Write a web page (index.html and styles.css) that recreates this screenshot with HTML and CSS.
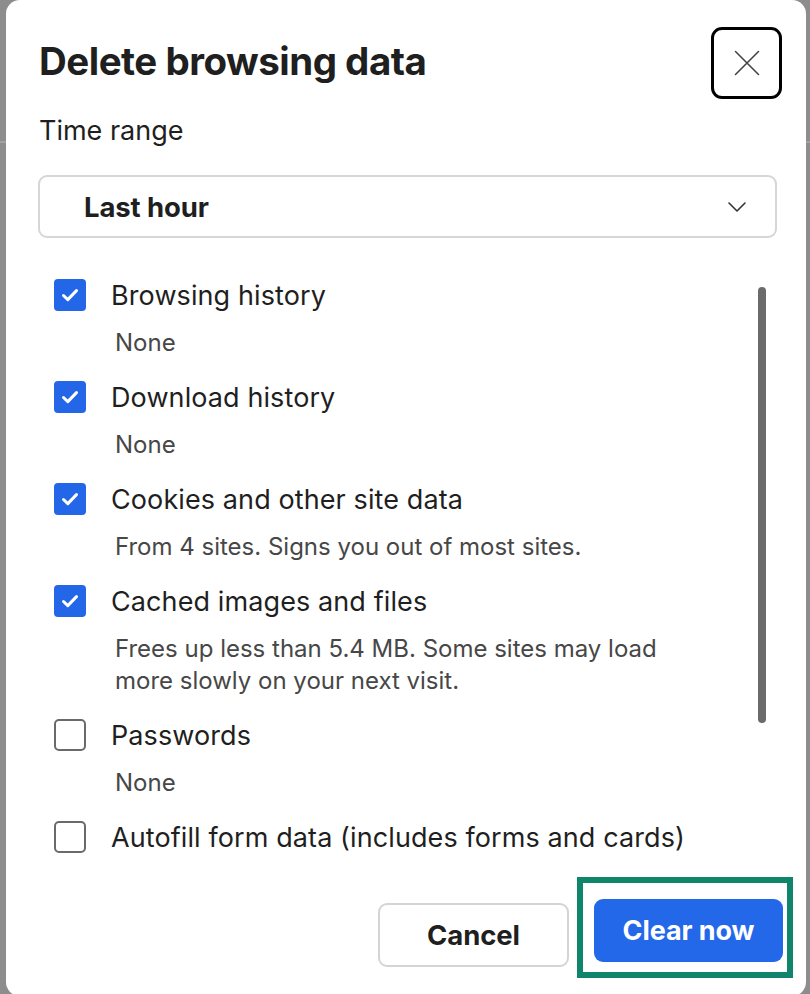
FILE: index.html
```html
<!DOCTYPE html>
<html lang="en">
<head>
<meta charset="utf-8">
<title>Delete browsing data</title>
<link rel="stylesheet" href="styles.css">
</head>
<body>
<div class="dialog">
  <header class="head">
    <h1 class="title">Delete browsing data</h1>
    <button class="close" aria-label="Close">
      <svg width="26" height="26" viewBox="0 0 26 26"><path d="M1.5 1.5 L24.5 24.5 M24.5 1.5 L1.5 24.5" stroke="#454545" stroke-width="1.6" fill="none" stroke-linecap="round"/></svg>
    </button>
  </header>
  <div class="field-label">Time range</div>
  <div class="select">
    <span class="select-value">Last hour</span>
    <svg class="chev" width="18" height="10" viewBox="0 0 18 10"><path d="M1 1 L9 9 L17 1" stroke="#333" stroke-width="1.6" fill="none" stroke-linecap="round" stroke-linejoin="round"/></svg>
  </div>
  <div class="list">
    <div class="item">
      <div class="row"><span class="box checked"><svg width="32" height="32" viewBox="0 0 32 32"><path d="M9.5 16.5 L13.8 20.6 L22.5 11.6" stroke="#fff" stroke-width="3" fill="none" stroke-linecap="round" stroke-linejoin="round"/></svg></span><span class="label">Browsing history</span></div>
      <div class="sub">None</div>
    </div>
    <div class="item">
      <div class="row"><span class="box checked"><svg width="32" height="32" viewBox="0 0 32 32"><path d="M9.5 16.5 L13.8 20.6 L22.5 11.6" stroke="#fff" stroke-width="3" fill="none" stroke-linecap="round" stroke-linejoin="round"/></svg></span><span class="label">Download history</span></div>
      <div class="sub">None</div>
    </div>
    <div class="item">
      <div class="row"><span class="box checked"><svg width="32" height="32" viewBox="0 0 32 32"><path d="M9.5 16.5 L13.8 20.6 L22.5 11.6" stroke="#fff" stroke-width="3" fill="none" stroke-linecap="round" stroke-linejoin="round"/></svg></span><span class="label">Cookies and other site data</span></div>
      <div class="sub">From 4 sites. Signs you out of most sites.</div>
    </div>
    <div class="item">
      <div class="row"><span class="box checked"><svg width="32" height="32" viewBox="0 0 32 32"><path d="M9.5 16.5 L13.8 20.6 L22.5 11.6" stroke="#fff" stroke-width="3" fill="none" stroke-linecap="round" stroke-linejoin="round"/></svg></span><span class="label">Cached images and files</span></div>
      <div class="sub">Frees up less than 5.4 MB. Some sites may load<br>more slowly on your next visit.</div>
    </div>
    <div class="item">
      <div class="row"><span class="box"></span><span class="label">Passwords</span></div>
      <div class="sub">None</div>
    </div>
    <div class="item">
      <div class="row"><span class="box"></span><span class="label">Autofill form data (includes forms and cards)</span></div>
    </div>
  </div>
  <div class="scrollbar"></div>
  <footer class="actions">
    <button class="btn cancel">Cancel</button>
    <div class="highlight">
      <button class="btn primary">Clear now</button>
    </div>
  </footer>
</div>
</body>
</html>
```
FILE: styles.css
```css
html, body {
  margin: 0;
  padding: 0;
}
body {
  width: 810px;
  height: 994px;
  overflow: hidden;
  background-color: #8d8d8d;
  background-image: linear-gradient(to bottom, transparent 141px, #a2a2a2 141px, #a2a2a2 143px, transparent 143px);
  font-family: Inter, "Liberation Sans", Arial, sans-serif;
  color: #1f1f1f;
}
.dialog {
  position: relative;
  margin-left: 6px;
  width: 800px;
  height: 996px;
  background: #fff;
  border-radius: 14px;
  box-sizing: border-box;
  padding: 27px 13px 0 33px;
}
.head {
  display: flex;
  align-items: center;
  justify-content: space-between;
  padding-right: 11px;
}
.title {
  margin: 0 0 5px 0;
  font-size: 38.5px;
  font-weight: 700;
  letter-spacing: -0.5px;
  line-height: 44px;
  color: #1f1f1f;
}
.close {
  width: 71px;
  height: 72px;
  box-sizing: border-box;
  border: 3px solid #000;
  border-radius: 11px;
  background: #fff;
  display: flex;
  align-items: center;
  justify-content: center;
  padding: 0;
}
.field-label {
  margin-top: 16px;
  font-size: 27px;
  line-height: 32px;
  color: #1f1f1f;
}
.select {
  margin-top: 28px;
  width: 739px;
  height: 63px;
  margin-left: -1px;
  box-sizing: border-box;
  border: 2px solid #d6d6d6;
  border-radius: 9px;
  display: flex;
  align-items: center;
  justify-content: space-between;
  padding: 0 29px 0 44px;
}
.select-value {
  font-size: 27.5px;
  font-weight: 700;
  letter-spacing: -0.1px;
}
.chev {
  display: block;
}
.list {
  margin-top: 37px;
  padding-left: 15px;
  display: flex;
  flex-direction: column;
  gap: 18px;
}
.row {
  display: flex;
  align-items: center;
  height: 40px;
  gap: 25px;
}
.box {
  width: 32px;
  height: 32px;
  box-sizing: border-box;
  border: 2px solid #6a6a6a;
  border-radius: 5px;
  flex: none;
}
.box.checked {
  border: none;
  background: #2366e8;
  border-radius: 4px;
}
.box svg {
  display: block;
}
.label {
  font-size: 27px;
  letter-spacing: 0.1px;
  color: #1f1f1f;
}
.sub {
  margin-top: 12px;
  padding-left: 61px;
  font-size: 24px;
  line-height: 32px;
  color: #474747;
}
.scrollbar {
  position: absolute;
  left: 752px;
  top: 287px;
  width: 8px;
  height: 436px;
  border-radius: 4px;
  background: #6b6b6b;
}
.actions {
  margin-top: 20px;
  display: flex;
  justify-content: flex-end;
  align-items: flex-start;
  gap: 8px;
}
.btn {
  font-family: Inter, "Liberation Sans", Arial, sans-serif;
  font-weight: 700;
  border-radius: 9px;
  box-sizing: border-box;
  cursor: pointer;
  padding: 0;
}
.cancel {
  margin-top: 26px;
  width: 191px;
  height: 64px;
  background: #fff;
  border: 2px solid #d4d4d4;
  color: #1f1f1f;
  font-size: 27.5px;
  letter-spacing: -0.1px;
}
.highlight {
  border: 6px solid #0f866b;
  padding: 16px 4px 10px 11px;
}
.primary {
  display: block;
  width: 189px;
  height: 63px;
  background: #2368e9;
  border: none;
  color: #fff;
  font-size: 27px;
  letter-spacing: -0.1px;
}
```
